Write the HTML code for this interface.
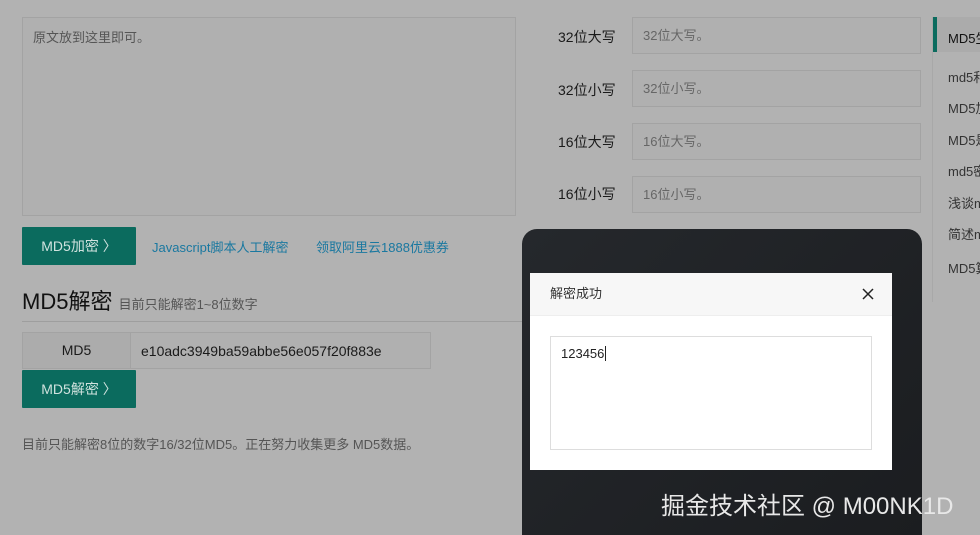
<!DOCTYPE html>
<html style="margin:0;width:980px;height:535px;overflow:hidden"><head><meta charset="utf-8"><style>
body{margin:0;width:980px;height:535px;background:#b2b2b2;position:relative;overflow:hidden;font-family:"Liberation Sans","Noto Sans CJK SC",sans-serif;font-size:13px;color:#1a1a1a}
.a{position:absolute}
.ta{left:22px;top:17px;width:494px;height:199px;border:1px solid #a3a3a3;background:#b0b0b0;box-sizing:border-box;padding:9px 10px;color:#555}
.btn{background:#0b6b5e;color:#d0e2de;width:114px;height:38px;line-height:38px;text-align:center;font-size:14px;border-radius:1px}
.lbl{left:558px;width:60px;font-size:14px;color:#1a1a1a}
.inp{left:632px;width:289px;height:37px;border:1px solid #a3a3a3;background:#b0b0b0;box-sizing:border-box;padding:0 10px;line-height:35px;color:#666;font-size:13px}
.side{left:948px;font-size:13px;color:#333;white-space:nowrap}
</style></head><body>
<div class="a ta">原文放到这里即可。</div>
<div class="a btn" style="left:22px;top:227px">MD5加密 〉</div>
<div class="a" style="left:152px;top:237px;color:#1a78a0">Javascript脚本人工解密</div>
<div class="a" style="left:316px;top:237px;color:#1a78a0">领取阿里云1888优惠券</div>
<div class="a" style="left:22px;top:284px;font-size:22px;color:#111;white-space:nowrap">MD5解密 <span style="font-size:13px;color:#555">目前只能解密1~8位数字</span></div>
<div class="a" style="left:22px;top:321px;width:520px;height:1px;background:#9e9e9e"></div>
<div class="a" style="left:22px;top:332px;width:409px;height:37px;border:1px solid #a3a3a3;box-sizing:border-box;background:#b0b0b0"></div>
<div class="a" style="left:22px;top:332px;width:109px;height:37px;border:1px solid #a3a3a3;box-sizing:border-box;background:#acacac;text-align:center;line-height:35px;font-size:14px">MD5</div>
<div class="a" style="left:141px;top:343px;font-size:14px">e10adc3949ba59abbe56e057f20f883e</div>
<div class="a btn" style="left:22px;top:370px">MD5解密 〉</div>
<div class="a" style="left:22px;top:434px;color:#555">目前只能解密8位的数字16/32位MD5。正在努力收集更多 MD5数据。</div>

<div class="a lbl" style="top:27px">32位大写</div><div class="a inp" style="top:17px">32位大写。</div>
<div class="a lbl" style="top:80px">32位小写</div><div class="a inp" style="top:70px">32位小写。</div>
<div class="a lbl" style="top:132px">16位大写</div><div class="a inp" style="top:123px">16位大写。</div>
<div class="a lbl" style="top:184px">16位小写</div><div class="a inp" style="top:176px">16位小写。</div>

<div class="a" style="left:932px;top:17px;width:1px;height:285px;background:#a8a8a8"></div>
<div class="a" style="left:933px;top:17px;width:47px;height:35px;background:#ababab"></div>
<div class="a" style="left:933px;top:17px;width:4px;height:35px;background:#0b6b5e"></div>
<div class="a side" style="top:28px;color:#111">MD5生成</div>
<div class="a side" style="top:67px">md5和</div>
<div class="a side" style="top:98px">MD5加</div>
<div class="a side" style="top:130px">MD5是</div>
<div class="a side" style="top:161px">md5密</div>
<div class="a side" style="top:193px">浅谈md</div>
<div class="a side" style="top:224px">简述md</div>
<div class="a side" style="top:258px">MD5算</div>

<div class="a" style="left:522px;top:229px;width:400px;height:306px;border-radius:15px 15px 0 0;background:linear-gradient(135deg,#25282c,#1b1d20)"></div>
<div class="a" style="left:530px;top:273px;width:362px;height:197px;background:#fff">
<div style="height:42px;background:#f7f7f7;border-bottom:1px solid #eee;line-height:42px;padding-left:20px;font-size:13px;color:#333">解密成功</div>
<svg style="position:absolute;left:332px;top:15px" width="12" height="12" viewBox="0 0 12 12"><path d="M1 1L11 11M11 1L1 11" stroke="#222" stroke-width="1.5"/></svg>
<div style="position:absolute;left:20px;top:63px;width:322px;height:114px;border:1px solid #ddd;box-sizing:border-box;padding:9px 10px;font-size:13px;color:#222">123456<span style="border-left:1px solid #222;margin-left:1px"></span></div>
</div>
<div class="a" style="left:661px;top:486px;font-size:24px;color:#e8e8e8;white-space:nowrap">掘金技术社区 @ M00NK1D</div>
</body></html>
